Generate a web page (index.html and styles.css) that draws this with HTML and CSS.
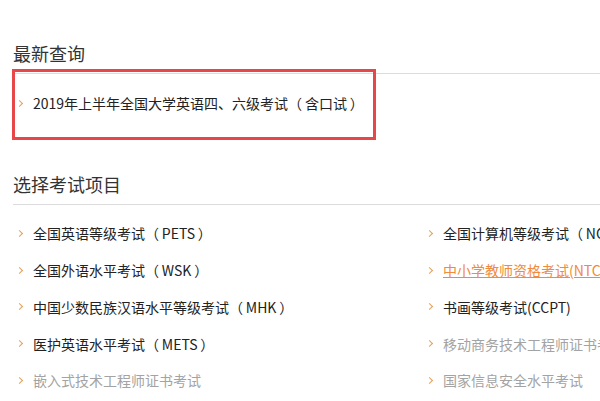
FILE: index.html
```html
<!DOCTYPE html>
<html lang="zh-CN">
<head>
<meta charset="utf-8">
<link rel="stylesheet" href="styles.css">
</head>
<body>
<div class="page">
  <section class="recent">
    <h2 class="title">最新查询</h2>
    <ul class="list">
      <li class="item"><span class="arrow"></span><a class="link dark">2019年上半年全国大学英语四、六级考试（&thinsp;含口试&thinsp;）</a></li>
    </ul>
    <div class="highlight"></div>
  </section>
  <section class="choose">
    <h2 class="title">选择考试项目</h2>
    <ul class="list grid">
      <li class="item"><span class="arrow"></span><a class="link dark">全国英语等级考试（&thinsp;PETS&thinsp;）</a></li>
      <li class="item"><span class="arrow"></span><a class="link dark">全国计算机等级考试（&thinsp;NCRE&thinsp;）</a></li>
      <li class="item"><span class="arrow"></span><a class="link dark">全国外语水平考试（&thinsp;WSK&thinsp;）</a></li>
      <li class="item"><span class="arrow"></span><a class="link orange">中小学教师资格考试(NTCE)</a></li>
      <li class="item"><span class="arrow"></span><a class="link dark">中国少数民族汉语水平等级考试（&thinsp;MHK&thinsp;）</a></li>
      <li class="item"><span class="arrow"></span><a class="link dark">书画等级考试(CCPT)</a></li>
      <li class="item"><span class="arrow"></span><a class="link dark">医护英语水平考试（&thinsp;METS&thinsp;）</a></li>
      <li class="item"><span class="arrow"></span><a class="link gray">移动商务技术工程师证书考试</a></li>
      <li class="item"><span class="arrow"></span><a class="link gray">嵌入式技术工程师证书考试</a></li>
      <li class="item"><span class="arrow"></span><a class="link gray">国家信息安全水平考试</a></li>
    </ul>
  </section>
</div>
</body>
</html>
```
FILE: styles.css
```css
html, body {
  margin: 0;
  padding: 0;
  background: #fff;
  overflow: hidden;
}
body {
  width: 600px;
  height: 401px;
  font-family: "Microsoft YaHei", "Noto Sans CJK SC", "Noto Sans", sans-serif;
  color: #333;
}
.page {
  padding: 41px 0 0 13px;
  width: 900px;
}
.recent {
  position: relative;
}
.title {
  margin: 0;
  font-size: 18px;
  font-weight: normal;
  line-height: 24px;
  color: #333;
  padding-bottom: 8px;
  border-bottom: 1px solid #dcdcdc;
}
.list {
  list-style: none;
  margin: 0;
  padding: 11px 0 0 0;
}
.choose {
  margin-top: 51px;
}
.choose .list {
  padding-top: 10px;
}
.grid {
  display: grid;
  grid-template-columns: 410px 410px;
}
.item {
  display: flex;
  align-items: center;
  height: 36.75px;
  font-size: 14px;
  white-space: nowrap;
}
.recent .item {
  height: 36px;
}
.arrow {
  width: 4px;
  height: 4px;
  border-top: 1px solid #e3a05a;
  border-right: 1px solid #e3a05a;
  transform: rotate(45deg);
  margin: 0 0 0 4px;
  flex: none;
}
.link {
  margin-left: 11px;
  text-decoration: none;
}
.dark { color: #222; }
.gray { color: #a3a3a3; }
.orange {
  color: #f08a3c;
  text-decoration: underline;
}
.highlight {
  position: absolute;
  left: -1px;
  top: 28px;
  width: 358px;
  height: 65px;
  border: 3px solid #e8474a;
  pointer-events: none;
}
```
